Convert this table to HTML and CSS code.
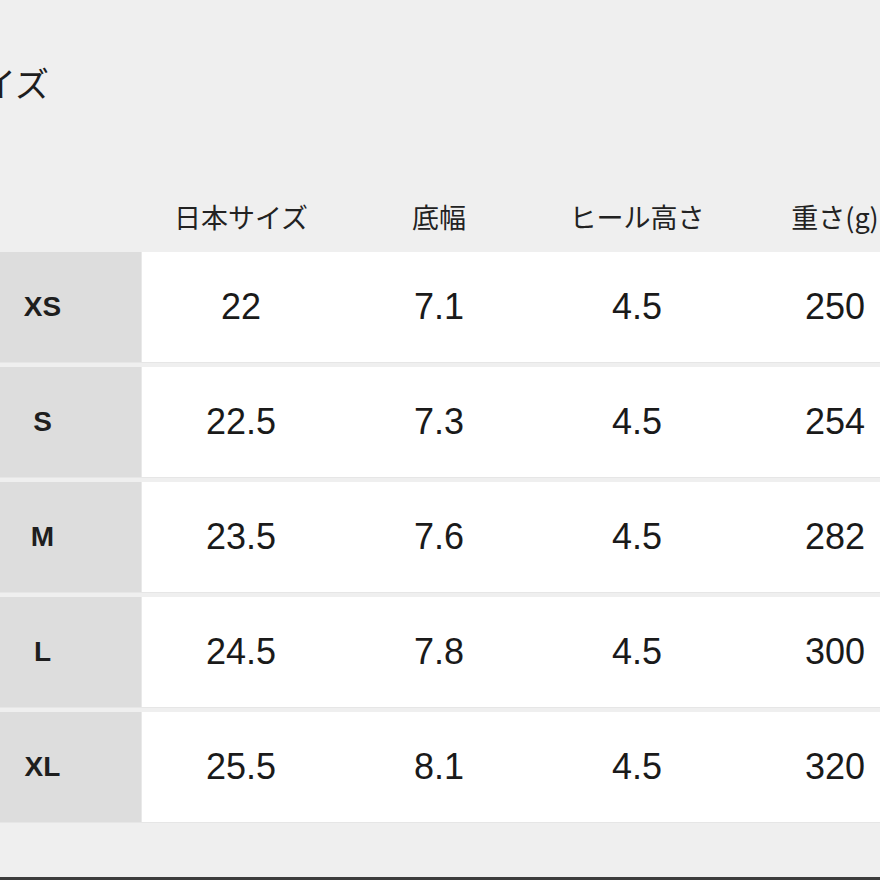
FILE: index.html
```html
<!DOCTYPE html>
<html lang="ja">
<head>
<meta charset="utf-8">
<link rel="stylesheet" href="styles.css">
</head>
<body>
<div class="page">
  <h1 class="title">サイズ</h1>
  <div class="table">
    <div class="row head">
      <div class="cell"></div>
      <div class="cell">日本サイズ</div>
      <div class="cell">底幅</div>
      <div class="cell">ヒール高さ</div>
      <div class="cell">重さ(g)</div>
    </div>
    <div class="row">
      <div class="cell label">XS</div>
      <div class="cell val">22</div>
      <div class="cell val">7.1</div>
      <div class="cell val">4.5</div>
      <div class="cell val">250</div>
    </div>
    <div class="row">
      <div class="cell label">S</div>
      <div class="cell val">22.5</div>
      <div class="cell val">7.3</div>
      <div class="cell val">4.5</div>
      <div class="cell val">254</div>
    </div>
    <div class="row">
      <div class="cell label">M</div>
      <div class="cell val">23.5</div>
      <div class="cell val">7.6</div>
      <div class="cell val">4.5</div>
      <div class="cell val">282</div>
    </div>
    <div class="row">
      <div class="cell label">L</div>
      <div class="cell val">24.5</div>
      <div class="cell val">7.8</div>
      <div class="cell val">4.5</div>
      <div class="cell val">300</div>
    </div>
    <div class="row">
      <div class="cell label">XL</div>
      <div class="cell val">25.5</div>
      <div class="cell val">8.1</div>
      <div class="cell val">4.5</div>
      <div class="cell val">320</div>
    </div>
  </div>
  <div class="bottom-bar"></div>
</div>
</body>
</html>
```
FILE: styles.css
```css
html, body {
  margin: 0;
  padding: 0;
  background: #efefef;
  overflow: hidden;
}
body {
  width: 880px;
  height: 880px;
  font-family: "Liberation Sans", "Noto Sans CJK JP", sans-serif;
  color: #1e1e1e;
}
.page {
  height: 880px;
  display: flex;
  flex-direction: column;
  margin-left: -56px;
  width: 990px;
}
.title {
  margin: 62px 0 0 4px;
  font-family: "Noto Sans CJK JP", sans-serif;
  font-weight: 400;
  font-size: 34px;
  line-height: 42px;
  height: 42px;
}
.table {
  margin-top: 76px;
  display: flex;
  flex-direction: column;
  gap: 5px;
}
.row {
  display: grid;
  grid-template-columns: repeat(5, 198px);
  height: 110px;
  box-shadow: 0 1px 0 #e6e6e6;
}
.row.head {
  height: 72px;
  box-shadow: none;
  margin-bottom: -5px;
}
.cell {
  display: flex;
  align-items: center;
  justify-content: center;
  background: #ffffff;
}
.head .cell {
  background: transparent;
  font-family: "Noto Sans CJK JP", sans-serif;
  font-size: 27px;
  color: #222;
}
.cell.label {
  background: #dddddd;
  font-weight: 700;
  font-size: 28px;
  border-right: 1px solid #e9e9e9;
}
.cell.val {
  font-size: 36px;
  color: #1a1a1a;
}
.bottom-bar {
  margin-top: auto;
  height: 3px;
  background: #3c3c3c;
  margin-left: 56px;
}
```
